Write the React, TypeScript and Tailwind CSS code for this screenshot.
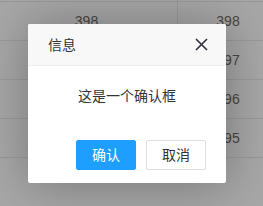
import type React from 'react'

const rows = [398, 397, 396, 395]

const App: React.FC = () => {
	return (
		<div
			className="relative w-[263px] h-[206px] overflow-hidden bg-[#f0f0f0] text-[#666] text-sm"
			style={{ fontFamily: '"Liberation Sans", "Noto Sans CJK SC", sans-serif' }}
		>
			{/* Table behind the shade */}
			<div className="flex flex-col">
				<div className="h-[2px] border-b border-[#dcdcdc] flex">
					<div className="w-[178px] border-r border-[#dcdcdc]" />
				</div>
				{rows.map((n) => (
					<div className="flex h-[39px] border-b border-[#dcdcdc]" key={n}>
						<div className="w-[178px] shrink-0 border-r border-[#dcdcdc] flex items-center justify-center pr-[4px]">
							{n}
						</div>
						<div className="w-[100px] shrink-0 flex items-center justify-center">{n}</div>
					</div>
				))}
			</div>

			{/* Shade */}
			<div className="absolute inset-0 bg-black/30" />

			{/* Confirm dialog */}
			<div className="absolute left-[28px] top-[24px] w-[198px] h-[159px] bg-white rounded-[2px] shadow-[1px_1px_50px_rgba(0,0,0,0.3)] flex flex-col">
				<div className="h-[42px] shrink-0 bg-[#f8f8f8] border-b border-[#eee] rounded-t-[2px] flex items-center justify-between pl-[20px] pr-[18px]">
					<span className="text-[#333]">信息</span>
					<svg width="13" height="13" viewBox="0 0 13 13" fill="none">
						<path d="M1 1L12 12M12 1L1 12" stroke="#2E2D3C" strokeWidth="1.6" />
					</svg>
				</div>
				<div className="px-[20px] py-[20px] leading-[20px] text-center text-[#333]">这是一个确认框</div>
				<div className="flex justify-end gap-[10px] px-[20px] pt-[14px]">
					<button className="w-[60px] h-[30px] rounded-[2px] bg-[#1E9FFF] border border-[#1E9FFF] text-white text-sm">
						确认
					</button>
					<button className="w-[60px] h-[30px] rounded-[2px] bg-white border border-[#dedede] text-[#333] text-sm">
						取消
					</button>
				</div>
			</div>
		</div>
	)
}

export default App
